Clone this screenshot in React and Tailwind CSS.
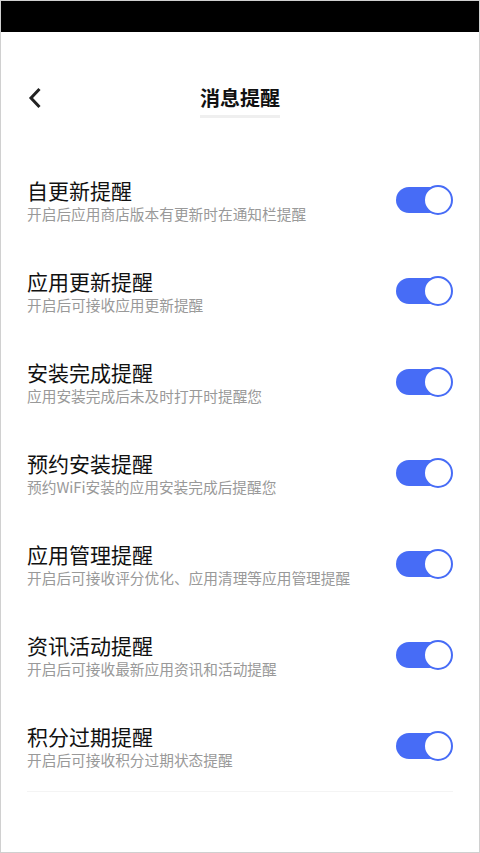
import React, { useState } from "react";

const items = [
  { title: "自更新提醒", desc: "开启后应用商店版本有更新时在通知栏提醒" },
  { title: "应用更新提醒", desc: "开启后可接收应用更新提醒" },
  { title: "安装完成提醒", desc: "应用安装完成后未及时打开时提醒您" },
  { title: "预约安装提醒", desc: "预约WiFi安装的应用安装完成后提醒您" },
  { title: "应用管理提醒", desc: "开启后可接收评分优化、应用清理等应用管理提醒" },
  { title: "资讯活动提醒", desc: "开启后可接收最新应用资讯和活动提醒" },
  { title: "积分过期提醒", desc: "开启后可接收积分过期状态提醒" },
];

function Toggle({ on, onClick }) {
  return (
    <button onClick={onClick} className="relative w-[57px] h-[30px] shrink-0">
      <span
        className={`absolute left-0 top-[2px] w-[46px] h-[26px] rounded-full ${
          on ? "bg-[#476cf6]" : "bg-[#d5d5d5]"
        }`}
      />
      <span
        className={`absolute top-0 w-[30px] h-[30px] rounded-full bg-white border-2 ${
          on ? "right-0 border-[#476cf6]" : "left-0 border-[#d5d5d5]"
        }`}
      />
    </button>
  );
}

export default function App() {
  const [states, setStates] = useState(items.map(() => true));

  const flip = (i) => setStates(states.map((s, j) => (j === i ? !s : s)));

  return (
    <div
      className="w-[480px] h-[853px] bg-white border border-[#d0d0d0] flex flex-col"
      style={{ fontFamily: '"Noto Sans CJK SC", "Noto Sans", sans-serif' }}
    >
      {/* status bar */}
      <div className="h-[31px] bg-black shrink-0" />

      {/* header */}
      <div className="h-[122px] shrink-0 relative flex justify-center pt-[53px]">
        <button className="absolute left-[24px] top-[54px] w-[20px] h-[24px] flex items-center justify-center">
          <svg width="14" height="22" viewBox="0 0 14 22" fill="none">
            <path d="M11.5 2 L3 11 L11.5 20" stroke="#222" strokeWidth="3" />
          </svg>
        </button>
        <div className="flex flex-col items-center">
          <span className="text-[20px] leading-[26px] font-bold text-[#111]">消息提醒</span>
          <span className="w-[80px] h-[3px] bg-[#efefef] mt-[4px]" />
        </div>
      </div>

      {/* list */}
      <div className="px-[26px]">
        {items.map((item, i) => (
          <div key={item.title} className="h-[91px] flex items-center justify-between">
            <div className="flex flex-col">
              <span className="text-[21px] leading-[28px] text-[#111]">{item.title}</span>
              <span className="text-[14.7px] leading-[20px] text-[#999]">{item.desc}</span>
            </div>
            <Toggle on={states[i]} onClick={() => flip(i)} />
          </div>
        ))}
        <div className="h-px bg-[#f4f4f4]" />
      </div>
    </div>
  );
}
